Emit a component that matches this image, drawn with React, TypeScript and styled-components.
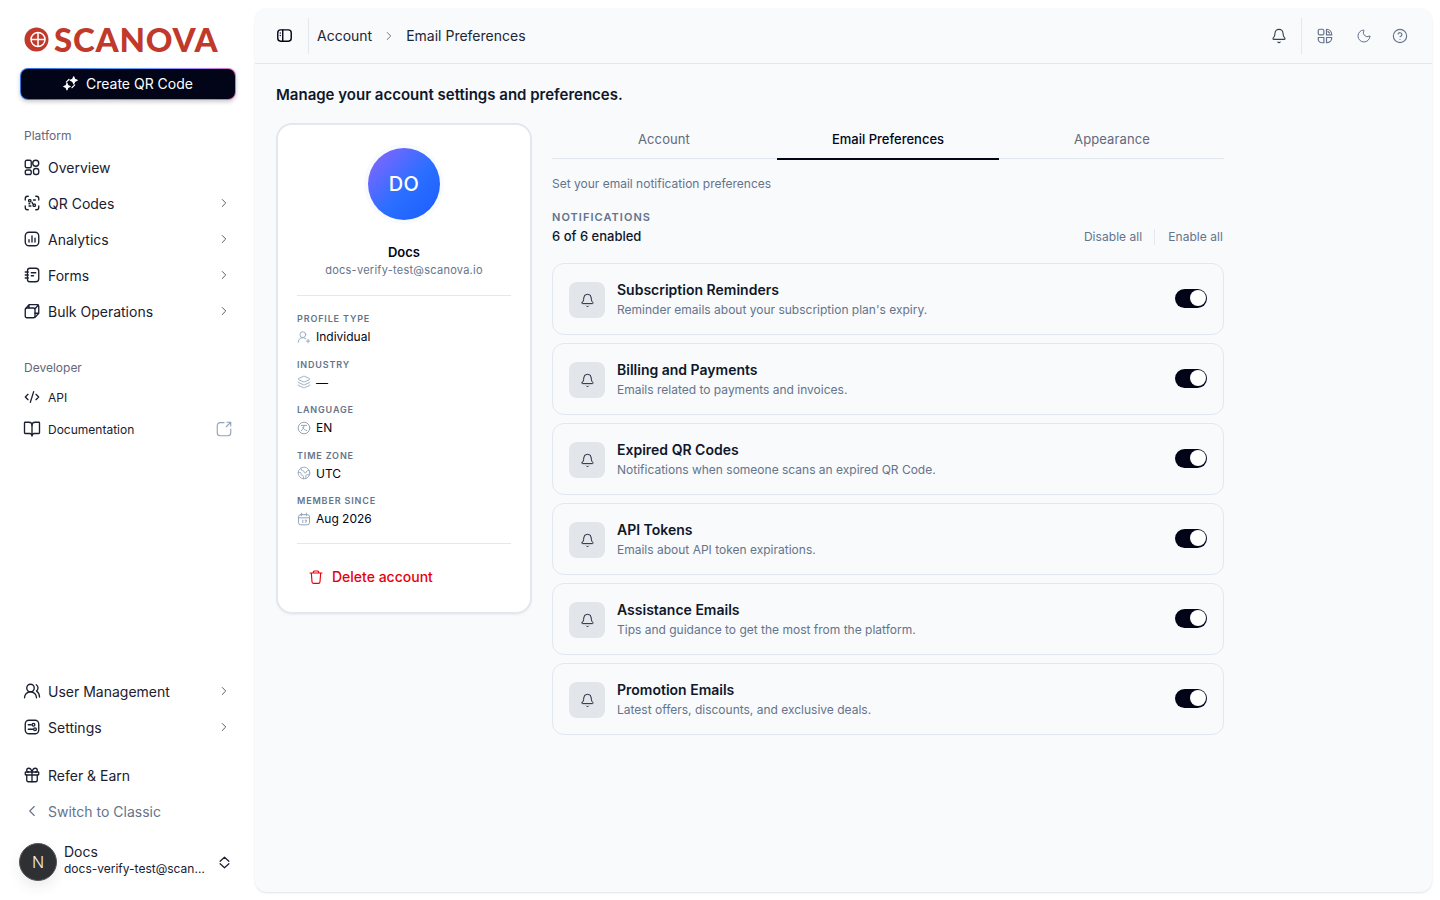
import React from "react";
import styled, { createGlobalStyle } from "styled-components";
import {
  Bell,
  BookOpen,
  ChevronLeft,
  ChevronRight,
  CircleHelp,
  CodeXml,
  Earth,
  Gift,
  Layers,
  Moon,
  UserRoundPlus,
  UsersRound,
} from "lucide-react";

const GlobalStyle = createGlobalStyle`
  html, body { margin: 0; padding: 0; background: #fff; }
  body {
    font-family: Inter, "Liberation Sans", sans-serif;
    color: #020617;
    -webkit-font-smoothing: antialiased;
  }
  * { box-sizing: border-box; }
`;

type IconProps = { size?: number; weight?: number };

const Svg = ({ size = 18, weight = 1.8, children }: IconProps & { children: React.ReactNode }) => (
  <svg width={size} height={size} viewBox="0 0 24 24" fill="none" stroke="currentColor" strokeWidth={weight} strokeLinecap="round" strokeLinejoin="round">
    {children}
  </svg>
);

const OverviewIcon = () => (
  <Svg>
    <rect x="3" y="3" width="8" height="10" rx="2" />
    <circle cx="17" cy="7" r="4" />
    <rect x="3" y="16" width="8" height="6" rx="2.5" />
    <rect x="14" y="14" width="7" height="8" rx="3" />
  </Svg>
);
const QrIcon = () => (
  <Svg>
    <path d="M3 8V6a3 3 0 0 1 3-3h1M17 3h1a3 3 0 0 1 3 3v2M21 16v2a3 3 0 0 1-3 3h-1M7 21H6a3 3 0 0 1-3-3v-2" />
    <rect x="7.500" y="7.500" width="3" height="3" rx="1" />
    <rect x="13.500" y="13.500" width="3" height="3" rx="1" />
    <path d="M14 8h2.500M8 16h2.500M8 13h1M12 11l1 2" />
  </Svg>
);
const AnalyticsIcon = () => (
  <Svg>
    <rect x="3" y="3" width="18" height="18" rx="5" />
    <path d="M8 16v-3M12 16V8M16 16v-5" />
  </Svg>
);
const FormsIcon = () => (
  <Svg>
    <path d="M6 6a3 3 0 0 1 3-3h8a4 4 0 0 1 4 4v10a4 4 0 0 1-4 4H9a3 3 0 0 1-3-3Z" />
    <path d="M11 9h6M11 13h3M3 8h4M3 12h4M3 16h4" />
  </Svg>
);
const BulkIcon = () => (
  <Svg>
    <rect x="3" y="8" width="13" height="13" rx="2" />
    <path d="M3.500 9 8 3.500h11A2 2 0 0 1 21 5.500V15l-5 5.500M16 9l4.500-5M8 3.500V8M16 15h5" />
  </Svg>
);
const SettingsIcon = () => (
  <Svg>
    <rect x="3" y="3" width="18" height="18" rx="5" />
    <path d="M7 9h4M7 15h6" />
    <circle cx="14" cy="9" r="1.800" />
    <circle cx="16" cy="15" r="1.800" />
  </Svg>
);
const ExternalIcon = () => (
  <Svg weight={1.5}>
    <path d="M12 3.500H7a4 4 0 0 0-4 4V17a4 4 0 0 0 4 4h10a4 4 0 0 0 4-4v-5" />
    <path d="M16 3h5v5M21 3l-6 6" />
  </Svg>
);
const UpDownIcon = () => (
  <Svg size={15} weight={2}>
    <path d="M5 10 12 3.500 19 10M5 14l7 6.500 7-6.500" />
  </Svg>
);
const SparkleIcon = () => (
  <Svg size={17} weight={1.6}>
    <path d="M16.500 2.500 18 6l3.500 1.500L18 9l-1.500 3.500L15 9l-3.500-1.500L15 6Z" fill="currentColor" />
    <path d="M7 11.500 8.300 15l3.200 1.300-3.200 1.300L7 21l-1.300-3.400-3.200-1.300 3.200-1.300Z" fill="currentColor" />
    <path d="m6 10 4-4M14 18l4-4" />
  </Svg>
);
const PanelIcon = () => (
  <Svg size={17} weight={2}>
    <rect x="2.500" y="4" width="19" height="16" rx="4" />
    <path d="M9.500 4v16M6 8.500v.01M6 12v.01" />
  </Svg>
);
const TranslateIcon = () => (
  <Svg size={18} weight={1.6}>
    <rect x="3" y="3" width="7.500" height="7.500" rx="2" />
    <path d="M14 3c4 0 7 3 7 7.500h-7ZM14 14h7c0 4-3 7-7 7ZM3 14h7.500v7H8a5 5 0 0 1-5-5Z" />
    <path d="m16 6 2 2" />
  </Svg>
);
const LanguageIcon = () => (
  <Svg size={14} weight={1.7}>
    <circle cx="12" cy="12" r="10" />
    <path d="M7.500 7.500h9M12 7.500c0 4-2 7-4.500 9M10 11.500c1 2 3.500 4 6.500 5" />
  </Svg>
);
const CalendarIcon = () => (
  <Svg size={14} weight={1.7}>
    <rect x="2.500" y="4.500" width="19" height="17.500" rx="4" />
    <path d="M8 2v4.500M16 2v4.500M2.500 10h19M10 14v4M14 14h2.500l-1.500 4" />
  </Svg>
);
const TrashIcon = () => (
  <Svg size={16} weight={1.7}>
    <path d="M3 6h18M8 6V4.500A2 2 0 0 1 10 3h4a2 2 0 0 1 2 1.500V6M5 6l1 13a2.500 2.500 0 0 0 2.500 2.500h7A2.500 2.500 0 0 0 18 19l1-13" />
  </Svg>
);

const Page = styled.div`
  display: flex;
  width: 1440px;
  height: 900px;
  overflow: hidden;
`;

const Sidebar = styled.aside`
  width: 255px;
  flex: none;
  display: flex;
  flex-direction: column;
  padding: 0 20px;
`;

const Logo = styled.div`
  height: 68px;
  display: flex;
  align-items: center;
  gap: 5px;
  padding: 11px 0 0 4px;
  color: #c0392b;
`;

const LogoWord = styled.span`
  font-family: Lato, "Liberation Sans", sans-serif;
  font-weight: 900;
  font-size: 33px;
  line-height: 1;
  letter-spacing: 0.8px;
`;

const CreateButton = styled.button`
  width: 216px;
  height: 32px;
  flex: none;
  display: flex;
  align-items: center;
  justify-content: center;
  gap: 7px;
  padding: 0 1px 1px 0;
  border: 1.500px solid transparent;
  border-radius: 8px;
  background:
    linear-gradient(#020418, #020418) padding-box,
    linear-gradient(120deg, #2f6fd6 0%, #60a5fa 45%, #a78bfa 75%, #ec6a9c 100%) border-box;
  box-shadow: 0 2px 4px rgba(2, 6, 23, 0.2);
  color: #fff;
  font: 400 14px Inter, sans-serif;
`;

const GroupLabel = styled.div<{ $top: number }>`
  margin-top: ${(p) => p.$top}px;
  padding-left: 4px;
  height: 20px;
  line-height: 20px;
  font-size: 12px;
  color: #64687a;
`;

const NavList = styled.nav<{ $top?: number }>`
  display: flex;
  flex-direction: column;
  margin-top: ${(p) => p.$top ?? 0}px;
`;

const NavItem = styled.div<{ $small?: boolean; $muted?: boolean }>`
  height: ${(p) => (p.$small ? 32 : 36)}px;
  display: flex;
  align-items: center;
  gap: 7px;
  padding: 0 4px 0 3px;
  font-size: ${(p) => (p.$small ? 12 : 14)}px;
  color: ${(p) => (p.$muted ? "#64748b" : "#1a2030")};
`;

const NavLabel = styled.span`
  flex: 1;
`;

const Trailing = styled.span<{ $faded?: boolean }>`
  display: flex;
  color: #565b6b;
  ${(p) => p.$faded && "color: #94a3b8; margin-right: -2px;"}
`;

const Selector = styled.span`
  display: flex;
  color: #1a2030;
  margin-right: 3px;
`;

const SidebarBottom = styled.div`
  margin-top: auto;
`;

const GapBlock = styled.div`
  height: 12px;
`;

const UserRow = styled.div`
  height: 38px;
  margin: 14px 0 19px -1px;
  display: flex;
  align-items: center;
  gap: 7px;
`;

const UserAvatar = styled.div`
  width: 38px;
  height: 38px;
  flex: none;
  border-radius: 50%;
  background: #2f3033;
  border: 1px solid #55555a;
  color: #f1f1f1;
  display: flex;
  align-items: center;
  justify-content: center;
  font-size: 16px;
  font-weight: 300;
  box-shadow: 0 6px 14px rgba(2, 6, 23, 0.08);
`;

const UserText = styled.div`
  flex: 1;
  min-width: 0;
  margin-top: -4px;
`;

const UserName = styled.div`
  font-size: 14px;
  line-height: 17px;
  color: #1a2030;
`;

const UserMail = styled.div`
  font-size: 12px;
  line-height: 17px;
  color: #1a2030;
  white-space: nowrap;
  overflow: hidden;
  text-overflow: ellipsis;
  width: 141px;
`;

const Panel = styled.main`
  flex: 1;
  margin: 8px 8px 8px 0;
  background: #f8fafc;
  border-radius: 12px;
  box-shadow: 0 1px 2px rgba(15, 23, 42, 0.12);
  display: flex;
  flex-direction: column;
`;

const TopBar = styled.header`
  height: 56px;
  flex: none;
  display: flex;
  align-items: center;
  padding: 0 24px 0 21px;
  border-bottom: 1px solid #e2e8f0;
`;

const TopDivider = styled.span<{ $left: number }>`
  width: 1px;
  height: 36px;
  margin-left: ${(p) => p.$left}px;
  background: #e2e8f0;
`;

const Crumbs = styled.div`
  display: flex;
  align-items: center;
  margin-left: 8px;
  font-size: 14px;
  color: #1e2535;
  flex: 1;
`;

const CrumbSep = styled.span`
  display: flex;
  color: #64748b;
  margin: 0 10px;
`;

const TopAction = styled.span<{ $dark?: boolean; $gap: number }>`
  display: flex;
  margin-left: ${(p) => p.$gap}px;
  color: ${(p) => (p.$dark ? "#334155" : "#64748b")};
`;

const Content = styled.div`
  padding: 21px 20px 0 21px;
`;

const PageTitle = styled.h1`
  margin: 0 0 17px;
  font-size: 15px;
  line-height: 20px;
  font-weight: 600;
  color: #0f172a;
`;

const Columns = styled.div`
  display: grid;
  grid-template-columns: 256px 672px;
  gap: 20px;
  align-items: start;
`;

const ProfileCard = styled.section`
  height: 491px;
  margin-top: 1px;
  background: #fff;
  border: 2px solid #e2e8f0;
  border-radius: 16px;
  padding: 23px 19px 0;
  box-shadow: 0 1px 2px rgba(15, 23, 42, 0.05);
`;

const AvatarWrap = styled.div`
  display: flex;
  justify-content: center;
`;

const BigAvatar = styled.div`
  width: 72px;
  height: 72px;
  border-radius: 50%;
  background: linear-gradient(135deg, #7c66ff 10%, #2a6fff 55%, #1a5cff 100%);
  box-shadow: 0 0 0 4px #f8fafc;
  color: #fff;
  display: flex;
  align-items: center;
  justify-content: center;
  font-size: 20px;
  font-weight: 500;
  letter-spacing: 0.3px;
`;

const ProfileName = styled.div`
  margin-top: 23px;
  text-align: center;
  font-size: 13px;
  line-height: 18px;
  font-weight: 600;
  color: #020617;
`;

const ProfileMail = styled.div`
  text-align: center;
  font-size: 11px;
  line-height: 18px;
  letter-spacing: 0.26px;
  color: #64748b;
`;

const CardRule = styled.hr<{ $top: number }>`
  margin: ${(p) => p.$top}px 0 0;
  border: 0;
  border-top: 1px solid #e2e8f0;
`;

const Facts = styled.dl`
  margin: 17px 0 0;
  display: flex;
  flex-direction: column;
  gap: 11.500px;
`;

const Fact = styled.div`
  display: flex;
  flex-direction: column;
  gap: 1px;
`;

const FactLabel = styled.dt`
  font-size: 9px;
  line-height: 12px;
  font-weight: 600;
  letter-spacing: 0.85px;
  color: #64748b;
`;

const FactValue = styled.dd`
  margin: 0;
  height: 21px;
  display: flex;
  align-items: center;
  gap: 5px;
  font-size: 12px;
  color: #020617;
`;

const FactIcon = styled.span`
  display: flex;
  color: #94a3b8;
`;

const DeleteButton = styled.button`
  margin: 22px 0 0 11px;
  padding: 0;
  border: 0;
  background: none;
  display: flex;
  align-items: center;
  gap: 8px;
  color: #e7000b;
  font: 500 14px Inter, sans-serif;
  line-height: 22px;
`;

const Tabs = styled.div`
  display: grid;
  grid-template-columns: repeat(3, 1fr);
  border-bottom: 1px solid #e2e8f0;
  margin-top: -2px;
  height: 39px;
`;

const Tab = styled.div<{ $active?: boolean }>`
  height: 40px;
  margin: 0 1px;
  display: flex;
  align-items: center;
  justify-content: center;
  font-size: 13px;
  letter-spacing: ${(p) => (p.$active ? 0 : 0.1)}px;
  font-weight: ${(p) => (p.$active ? 500 : 400)};
  color: ${(p) => (p.$active ? "#020617" : "#64687a")};
  border-bottom: 2px solid ${(p) => (p.$active ? "#020617" : "transparent")};
`;

const Lead = styled.p`
  margin: 16px 0 0;
  font-size: 12px;
  line-height: 18px;
  color: #64748b;
`;

const SummaryRow = styled.div`
  display: flex;
  align-items: flex-end;
  justify-content: space-between;
  margin-top: 17px;
`;

const SectionLabel = styled.div`
  font-size: 11px;
  line-height: 14px;
  font-weight: 600;
  letter-spacing: 1.050px;
  color: #64748b;
`;

const Count = styled.div`
  font-size: 13px;
  line-height: 20px;
  font-weight: 500;
  margin-top: 2px;
  color: #0f172a;
`;

const BulkLinks = styled.div`
  display: flex;
  align-items: center;
  margin: 0 1px -1px 0;
  font-size: 12px;
  line-height: 20px;
  letter-spacing: 0.05px;
  color: #64748b;
`;

const LinkDivider = styled.span`
  width: 1px;
  height: 16px;
  margin: 0 13px 0 12px;
  background: #e2e8f0;
`;

const PrefList = styled.div`
  margin-top: 17px;
  display: flex;
  flex-direction: column;
  gap: 8px;
`;

const PrefRow = styled.div`
  height: 72px;
  display: flex;
  align-items: center;
  gap: 12px;
  padding: 0 16px;
  border: 1px solid #e2e8f0;
  border-radius: 12px;
  background: #f8fafc;
`;

const PrefIcon = styled.span`
  width: 36px;
  height: 36px;
  flex: none;
  margin-top: 2px;
  display: flex;
  align-items: center;
  justify-content: center;
  border-radius: 8px;
  background: #e2e5e9;
  color: #1e293b;
`;

const PrefText = styled.div`
  flex: 1;
  padding-top: 2px;
`;

const PrefTitle = styled.div`
  font-size: 14px;
  line-height: 20px;
  font-weight: 600;
  color: #0f172a;
`;

const PrefDesc = styled.div`
  font-size: 12px;
  line-height: 20px;
  color: #64748b;
`;

const Toggle = styled.span`
  width: 32px;
  height: 19px;
  flex: none;
  display: flex;
  align-items: center;
  justify-content: flex-end;
  padding-right: 1.500px;
  border-radius: 10px;
  background: #020418;
  margin-top: -2px;
`;

const ToggleKnob = styled.span`
  width: 16px;
  height: 16px;
  border-radius: 50%;
  background: #fff;
`;

const platform = [
  { label: "Overview", icon: <OverviewIcon /> },
  { label: "QR Codes", icon: <QrIcon />, more: true },
  { label: "Analytics", icon: <AnalyticsIcon />, more: true },
  { label: "Forms", icon: <FormsIcon />, more: true },
  { label: "Bulk Operations", icon: <BulkIcon />, more: true },
];

const facts = [
  { label: "PROFILE TYPE", value: "Individual", icon: <UserRoundPlus size={14} strokeWidth={1.5} /> },
  { label: "INDUSTRY", value: "—", icon: <Layers size={14} strokeWidth={1.5} /> },
  { label: "LANGUAGE", value: "EN", icon: <LanguageIcon /> },
  { label: "TIME ZONE", value: "UTC", icon: <Earth size={14} strokeWidth={1.5} /> },
  { label: "MEMBER SINCE", value: "Aug 2026", icon: <CalendarIcon /> },
];

const prefs = [
  { title: "Subscription Reminders", desc: "Reminder emails about your subscription plan's expiry." },
  { title: "Billing and Payments", desc: "Emails related to payments and invoices." },
  { title: "Expired QR Codes", desc: "Notifications when someone scans an expired QR Code." },
  { title: "API Tokens", desc: "Emails about API token expirations." },
  { title: "Assistance Emails", desc: "Tips and guidance to get the most from the platform." },
  { title: "Promotion Emails", desc: "Latest offers, discounts, and exclusive deals." },
];

export default function App() {
  return (
    <Page>
      <GlobalStyle />
      <Sidebar>
        <Logo>
          <svg width="25" height="25" viewBox="0 0 25 25">
            <circle cx="12.500" cy="12.500" r="12" fill="#c0392b" />
            <path d="M7 12.500h14M14 6v13" stroke="#fff" strokeWidth="1.500" />
            <circle cx="14" cy="12.500" r="7" fill="none" stroke="#fff" strokeWidth="1.500" />
          </svg>
          <LogoWord>SCANOVA</LogoWord>
        </Logo>
        <CreateButton>
          <SparkleIcon />
          Create QR Code
        </CreateButton>

        <GroupLabel $top={26}>Platform</GroupLabel>
        <NavList $top={3}>
          {platform.map((item) => (
            <NavItem key={item.label}>
              {item.icon}
              <NavLabel>{item.label}</NavLabel>
              {item.more && (
                <Trailing>
                  <ChevronRight size={14} strokeWidth={1.7} />
                </Trailing>
              )}
            </NavItem>
          ))}
        </NavList>

        <GroupLabel $top={29}>Developer</GroupLabel>
        <NavList $top={3}>
          <NavItem $small>
            <CodeXml size={16} strokeWidth={2} style={{ margin: "0 1px" }} />
            <NavLabel>API</NavLabel>
          </NavItem>
          <NavItem $small>
            <BookOpen size={18} strokeWidth={1.8} />
            <NavLabel>Documentation</NavLabel>
            <Trailing $faded>
              <ExternalIcon />
            </Trailing>
          </NavItem>
        </NavList>

        <SidebarBottom>
          <NavList>
            <NavItem>
              <UsersRound size={18} strokeWidth={1.8} />
              <NavLabel>User Management</NavLabel>
              <Trailing>
                <ChevronRight size={14} strokeWidth={1.7} />
              </Trailing>
            </NavItem>
            <NavItem>
              <SettingsIcon />
              <NavLabel>Settings</NavLabel>
              <Trailing>
                <ChevronRight size={14} strokeWidth={1.7} />
              </Trailing>
            </NavItem>
            <GapBlock />
            <NavItem>
              <Gift size={18} strokeWidth={1.8} />
              <NavLabel>Refer &amp; Earn</NavLabel>
            </NavItem>
            <NavItem $muted>
              <ChevronLeft size={18} strokeWidth={1.5} />
              <NavLabel>Switch to Classic</NavLabel>
            </NavItem>
          </NavList>
          <UserRow>
            <UserAvatar>N</UserAvatar>
            <UserText>
              <UserName>Docs</UserName>
              <UserMail>docs-verify-test@scanova.io</UserMail>
            </UserText>
            <Selector>
              <UpDownIcon />
            </Selector>
          </UserRow>
        </SidebarBottom>
      </Sidebar>

      <Panel>
        <TopBar>
          <PanelIcon />
          <TopDivider $left={15} />
          <Crumbs>
            Account
            <CrumbSep>
              <ChevronRight size={14} strokeWidth={1.7} />
            </CrumbSep>
            Email Preferences
          </Crumbs>
          <TopAction $dark $gap={0}>
            <Bell size={16} strokeWidth={1.7} />
          </TopAction>
          <TopDivider $left={14} />
          <TopAction $gap={14}>
            <TranslateIcon />
          </TopAction>
          <TopAction $gap={22}>
            <Moon size={16} strokeWidth={1.5} />
          </TopAction>
          <TopAction $gap={20}>
            <CircleHelp size={16} strokeWidth={1.7} />
          </TopAction>
        </TopBar>

        <Content>
          <PageTitle>Manage your account settings and preferences.</PageTitle>
          <Columns>
            <ProfileCard>
              <AvatarWrap>
                <BigAvatar>DO</BigAvatar>
              </AvatarWrap>
              <ProfileName>Docs</ProfileName>
              <ProfileMail>docs-verify-test@scanova.io</ProfileMail>
              <CardRule $top={16} />
              <Facts>
                {facts.map((f) => (
                  <Fact key={f.label}>
                    <FactLabel>{f.label}</FactLabel>
                    <FactValue>
                      <FactIcon>{f.icon}</FactIcon>
                      {f.value}
                    </FactValue>
                  </Fact>
                ))}
              </Facts>
              <CardRule $top={14} />
              <DeleteButton>
                <TrashIcon />
                Delete account
              </DeleteButton>
            </ProfileCard>

            <div>
              <Tabs>
                <Tab>Account</Tab>
                <Tab $active>Email Preferences</Tab>
                <Tab>Appearance</Tab>
              </Tabs>
              <Lead>Set your email notification preferences</Lead>
              <SummaryRow>
                <div>
                  <SectionLabel>NOTIFICATIONS</SectionLabel>
                  <Count>6 of 6 enabled</Count>
                </div>
                <BulkLinks>
                  Disable all
                  <LinkDivider />
                  Enable all
                </BulkLinks>
              </SummaryRow>
              <PrefList>
                {prefs.map((p) => (
                  <PrefRow key={p.title}>
                    <PrefIcon>
                      <Bell size={15} strokeWidth={1.6} />
                    </PrefIcon>
                    <PrefText>
                      <PrefTitle>{p.title}</PrefTitle>
                      <PrefDesc>{p.desc}</PrefDesc>
                    </PrefText>
                    <Toggle>
                      <ToggleKnob />
                    </Toggle>
                  </PrefRow>
                ))}
              </PrefList>
            </div>
          </Columns>
        </Content>
      </Panel>
    </Page>
  );
}
